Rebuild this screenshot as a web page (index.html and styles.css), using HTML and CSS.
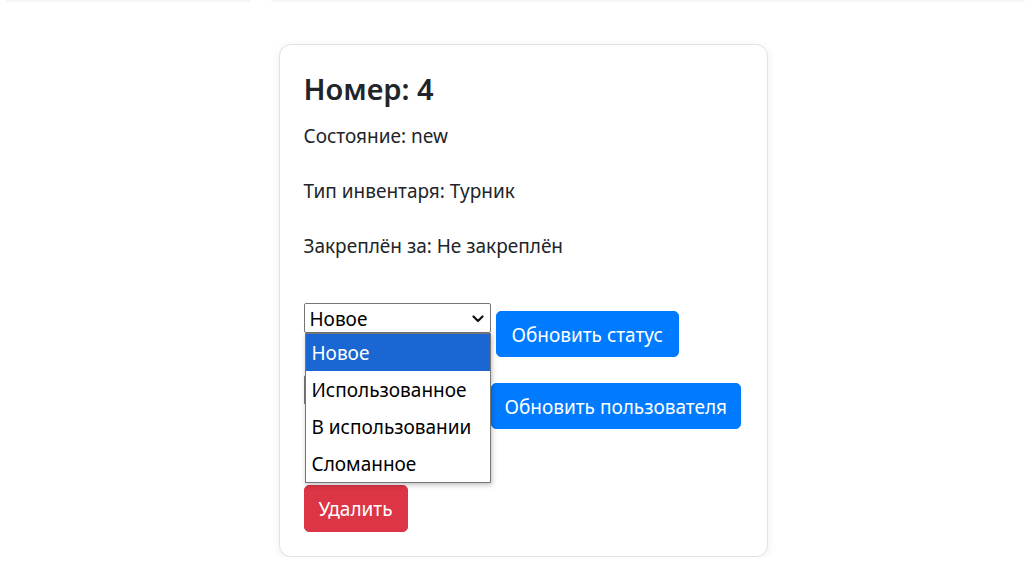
FILE: index.html
```html
<!DOCTYPE html>
<html lang="ru">
<head>
<meta charset="utf-8">
<title>Инвентарь</title>
<link rel="stylesheet" href="styles.css">
</head>
<body>
<div class="topbar">
  <div class="topbar-item topbar-left"></div>
  <div class="topbar-item topbar-right"></div>
</div>
<main class="page">
  <section class="card">
    <h2 class="card-title">Номер: 4</h2>
    <p class="info">Состояние: new</p>
    <p class="info">Тип инвентаря: Турник</p>
    <p class="info">Закреплён за: Не закреплён</p>

    <div class="actions">
      <div class="row">
        <div class="select-wrap">
          <select class="select select-status">
            <option>Новое</option>
            <option>Использованное</option>
            <option>В использовании</option>
            <option>Сломанное</option>
          </select>
          <svg class="chevron" width="12" height="8" viewBox="0 0 12 8"><path d="M1.5 1.5 L6 6 L10.5 1.5" fill="none" stroke="#111" stroke-width="2.2" stroke-linecap="round" stroke-linejoin="round"/></svg>
          <ul class="dropdown">
            <li class="dropdown-item is-active">Новое</li>
            <li class="dropdown-item">Использованное</li>
            <li class="dropdown-item">В использовании</li>
            <li class="dropdown-item">Сломанное</li>
          </ul>
        </div>
        <button class="btn btn-primary">Обновить статус</button>
      </div>

      <div class="row row-user">
        <div class="select-wrap">
          <select class="select select-user">
            <option>Не закреплён</option>
          </select>
        </div>
        <button class="btn btn-primary btn-wide">Обновить пользователя</button>
      </div>

      <button class="btn btn-danger btn-delete">Удалить</button>
    </div>
  </section>
</main>
</body>
</html>
```

FILE: styles.css
```css
* { box-sizing: border-box; }

body {
  margin: 0;
  background: #ffffff;
  color: #212529;
  font-family: "Noto Sans", "Open Sans", "DejaVu Sans", sans-serif;
  font-size: 19px;
  line-height: 1.5;
}

.topbar {
  display: flex;
  gap: 20px;
  padding: 0 6px;
  height: 4px;
}
.topbar-item {
  height: 3px;
  background: linear-gradient(#f1f1f1, #ffffff);
  border-radius: 0 0 6px 6px;
}
.topbar-left { width: 245px; }
.topbar-right { flex: 1; }

.page {
  display: flex;
  justify-content: center;
  padding-top: 40px;
  padding-left: 15px;
}

.card {
  width: 489px;
  padding: 25px 24px 24px;
  background: #fff;
  border: 1px solid #e2e2e2;
  border-radius: 12px;
  box-shadow: 0 2px 10px rgba(0, 0, 0, 0.07);
}

.card-title {
  margin: 0 0 15px;
  font-size: 29px;
  font-weight: 600;
  line-height: 38px;
  color: #212529;
}

.info {
  margin: 0 0 28px;
  line-height: 27px;
}

.actions {
  padding-top: 15px;
}

.row {
  display: flex;
  align-items: flex-start;
  gap: 5px;
}
.row-user {
  margin-top: 18px;
}

.select-wrap {
  position: relative;
  flex-shrink: 0;
}

.select {
  appearance: none;
  -webkit-appearance: none;
  height: 30px;
  padding: 2px 24px 0 5px;
  border: 1px solid #767676;
  border-radius: 2px;
  background: #fff;
  color: #000;
  font-family: inherit;
  font-size: 19px;
}
.select-status { width: 187px; }
.select-user { width: 182px; }

.chevron {
  position: absolute;
  right: 7px;
  top: 12px;
}

.dropdown {
  position: absolute;
  top: 30px;
  left: 1px;
  width: 186px;
  margin: 0;
  padding: 0;
  list-style: none;
  background: #fff;
  border: 1px solid #767676;
  box-shadow: 1px 2px 5px rgba(0, 0, 0, 0.25);
  z-index: 10;
}
.dropdown-item {
  height: 37px;
  padding: 2px 6px 0;
  line-height: 35px;
  font-size: 19px;
  color: #000;
  white-space: nowrap;
}
.dropdown-item.is-active {
  background: #1a66d2;
  color: #fff;
}

.btn {
  flex-shrink: 0;
  margin-top: 8px;
  height: 46px;
  padding: 2px 15px 0;
  border: 1px solid transparent;
  border-radius: 5px;
  font-family: inherit;
  font-size: 19px;
  line-height: 27px;
  color: #fff;
  white-space: nowrap;
  cursor: pointer;
}
.btn-wide {
  padding: 2px 13px 0;
}
.btn-primary {
  background: #007bff;
  border-color: #007bff;
}
.btn-danger {
  background: #dc3545;
  border-color: #dc3545;
}
.btn-delete {
  display: block;
  margin-top: 56px;
  height: 47px;
  padding: 2px 14px 0;
}
```
